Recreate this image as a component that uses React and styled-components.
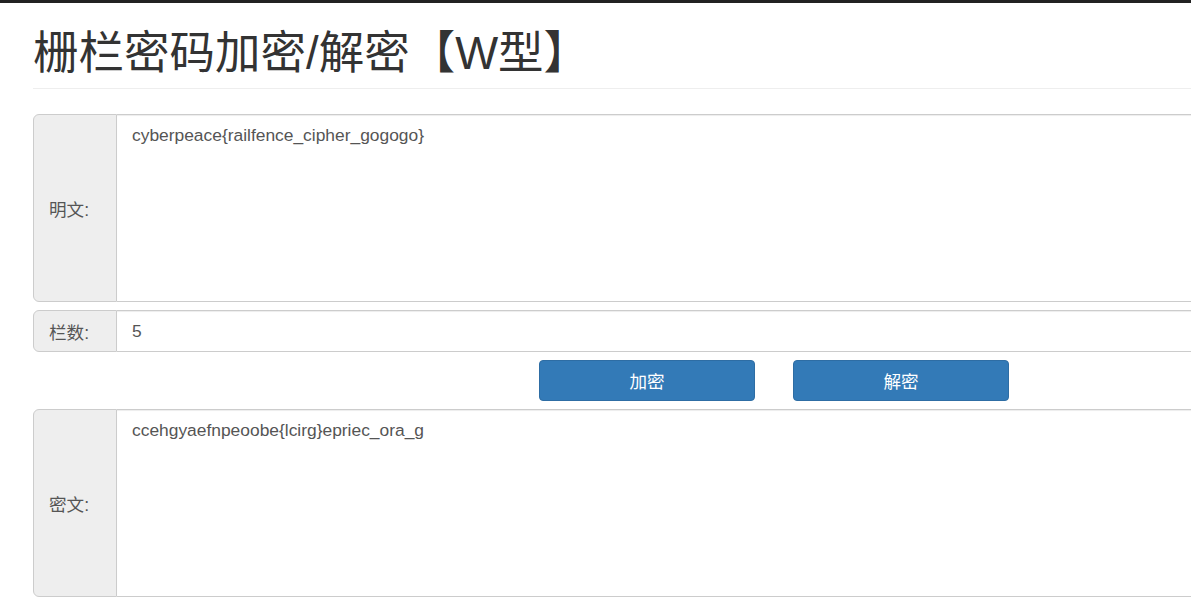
import styled, { createGlobalStyle } from "styled-components";

const GlobalStyle = createGlobalStyle`
  html, body {
    margin: 0;
    padding: 0;
    overflow: hidden;
    background: #fff;
  }
  body {
    border-top: 3px solid #222;
    font-family: "Liberation Sans", "Noto Sans CJK SC", sans-serif;
    color: #333;
  }
`;

const Page = styled.div`
  width: 1500px;
  padding: 0 0 0 33px;
`;

const Header = styled.div`
  margin: 26px 0 25px;
  padding-bottom: 9px;
  border-bottom: 1px solid #eee;
  h1 {
    margin: 0;
    font-family: "Liberation Sans", "Noto Sans CJK SC", sans-serif;
    font-size: 45.5px;
    font-weight: 400;
    line-height: 50px;
    color: #333;
  }
`;

const Form = styled.div`
  display: flex;
  flex-direction: column;
  gap: 8px;
`;

const Group = styled.div`
  display: flex;
  height: ${(p) => p.$height}px;
`;

const Addon = styled.label`
  display: flex;
  align-items: center;
  box-sizing: border-box;
  width: 84px;
  padding-left: 15px;
  flex: none;
  background: #eee;
  border: 1px solid #ccc;
  border-radius: 6px 0 0 6px;
  font-size: 17.6px;
  color: #555;
`;

const TextArea = styled.textarea`
  flex: 1;
  box-sizing: border-box;
  margin: 0;
  padding: 9px 15px;
  border: 1px solid #ccc;
  border-left: 0;
  border-radius: 0 6px 6px 0;
  box-shadow: inset 0 1px 1px rgba(0, 0, 0, 0.075);
  font-family: "Liberation Sans", "Noto Sans CJK SC", sans-serif;
  font-size: 17.4px;
  line-height: 23px;
  color: #555;
  resize: none;
  outline: none;
`;

const Input = styled.input`
  flex: 1;
  box-sizing: border-box;
  margin: 0;
  padding: 0 15px;
  border: 1px solid #ccc;
  border-left: 0;
  border-radius: 0 6px 6px 0;
  box-shadow: inset 0 1px 1px rgba(0, 0, 0, 0.075);
  font-family: "Liberation Sans", "Noto Sans CJK SC", sans-serif;
  font-size: 17.4px;
  color: #555;
  outline: none;
`;

const Buttons = styled.div`
  display: flex;
  gap: 38px;
  padding-left: 506px;
`;

const Button = styled.button`
  width: 216px;
  height: 41px;
  box-sizing: border-box;
  background: #337ab7;
  border: 1px solid #2e6da4;
  border-radius: 4px;
  color: #fff;
  font-family: "Liberation Sans", "Noto Sans CJK SC", sans-serif;
  font-size: 17.6px;
  cursor: pointer;
`;

export default function App() {
  return (
    <>
      <GlobalStyle />
      <Page>
        <Header>
          <h1>栅栏密码加密/解密【W型】</h1>
        </Header>
        <Form>
          <Group $height={188}>
            <Addon>明文:</Addon>
            <TextArea readOnly defaultValue="cyberpeace{railfence_cipher_gogogo}" />
          </Group>
          <Group $height={42}>
            <Addon>栏数:</Addon>
            <Input readOnly defaultValue="5" />
          </Group>
          <Buttons>
            <Button>加密</Button>
            <Button>解密</Button>
          </Buttons>
          <Group $height={188}>
            <Addon>密文:</Addon>
            <TextArea readOnly defaultValue="ccehgyaefnpeoobe{lcirg}epriec_ora_g" />
          </Group>
        </Form>
      </Page>
    </>
  );
}
